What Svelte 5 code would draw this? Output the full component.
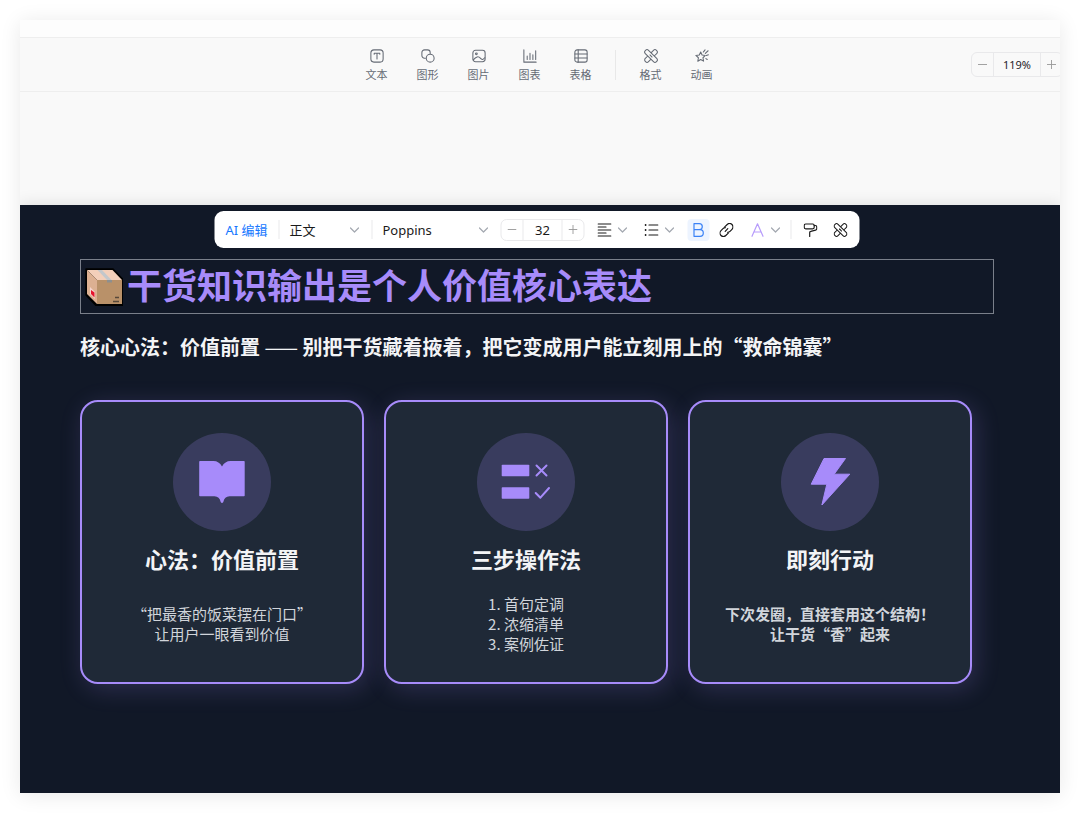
<script lang="ts">
    type Tool = { name: string; icon: string };

    type Card = {
        icon: string;
        title: string;
        lines: string[];
        strong?: boolean;
    };

    const insertTools: Tool[] = [
        { name: "文本", icon: "text" },
        { name: "图形", icon: "shape" },
        { name: "图片", icon: "image" },
        { name: "图表", icon: "chart" },
        { name: "表格", icon: "table" },
    ];

    const styleTools: Tool[] = [
        { name: "格式", icon: "format" },
        { name: "动画", icon: "motion" },
    ];

    const cards: Card[] = [
        { icon: "book", title: "心法：价值前置", lines: ["“把最香的饭菜摆在门口”", "让用户一眼看到价值"] },
        { icon: "steps", title: "三步操作法", lines: ["1. 首句定调", "2. 浓缩清单", "3. 案例佐证"] },
        { icon: "bolt", title: "即刻行动", lines: ["下次发圈，直接套用这个结构！", "让干货“香”起来"], strong: true },
    ];

    let zoom = $state(119);
    let fontSize = $state(32);
    let bold = $state(true);
</script>

{#snippet formatPaths()}
    <rect x="-1" y="5.4" width="18" height="5.2" rx="2.4" transform="rotate(45 8 8)" />
    <g transform="rotate(-45 8 8)">
        <path d="M5 5.4H1.4A2.4 2.4 0 0 0-1 7.800v.4a2.400 2.400 0 0 0 2.400 2.400H5" />
        <path d="M11 5.400h3.600A2.400 2.400 0 0 1 17 7.800v.4a2.400 2.400 0 0 1-2.400 2.400H11" />
    </g>
    <path d="M6.800 6.800l2.400 2.400" />
{/snippet}

{#snippet chevron()}
    <svg class="chevron" viewBox="0 0 10 10" aria-hidden="true"><path d="M1 3l4 4 4-4" /></svg>
{/snippet}

{#snippet toolButton(tool: Tool)}
    <button class="tool">
        <svg class="line-icon" viewBox="0 0 16 16" aria-hidden="true">
            {#if tool.icon === "text"}
                <rect x="1" y="1" width="14" height="14" rx="3.5" />
                <path d="M4.8 6V4.8h6.4V6M8 4.8v6.6" />
            {:else if tool.icon === "shape"}
                <path d="M5 10.5H4a3 3 0 0 1-3-3V4a3 3 0 0 1 3-3h3.5a3 3 0 0 1 3 3v1" />
                <circle cx="10.5" cy="10.5" r="4.5" />
            {:else if tool.icon === "image"}
                <rect x="1" y="1.5" width="14" height="13" rx="3" />
                <circle cx="5" cy="5.5" r="1" />
                <path d="M1.5 12.500c3-4 6-4.500 8-2s3.500 1.500 5-.5" />
            {:else if tool.icon === "chart"}
                <path d="M1 1v14h14M4.8 8v4M8 5v7M11.3 6.5V12M14.5 2v10" />
            {:else if tool.icon === "table"}
                <rect x="1" y="1" width="14" height="14" rx="2.5" />
                <path d="M4.8 1v14M1 5.7h14M1 10.3h14" />
            {:else if tool.icon === "format"}
                {@render formatPaths()}
            {:else}
                <path d="M6.5 3.5l1.600 3.400 3.700.5-2.700 2.600.7 3.900-3.300-1.900L3.200 14l.7-4L1 7.400l3.900-.5z" />
                <path d="M9.5 3.5 11.5 1M11.8 5l3.200-3M13 7.500l2.300-.8M12.500 11l1.500 1" />
            {/if}
        </svg>
        <span>{tool.name}</span>
    </button>
{/snippet}

<main class="window">
    <div class="strip"></div>

    <header class="topbar">
        <nav class="tools">
            {#each insertTools as tool (tool.name)}
                {@render toolButton(tool)}
            {/each}
            <span class="tools-divider"></span>
            {#each styleTools as tool (tool.name)}
                {@render toolButton(tool)}
            {/each}
        </nav>
        <div class="stepper zoom">
            <button aria-label="缩小" onclick={() => (zoom -= 1)}>
                <svg viewBox="0 0 10 10"><path d="M0 5h10" /></svg>
            </button>
            <input aria-label="缩放" value="{zoom}%" readonly />
            <button aria-label="放大" onclick={() => (zoom += 1)}>
                <svg viewBox="0 0 10 10"><path d="M0 5h10M5 0v10" /></svg>
            </button>
        </div>
    </header>

    <div class="canvas">
        <section class="slide">
            <div class="title-box">
                <svg class="package" viewBox="0 0 38 38" aria-hidden="true">
                    <path d="M1 1h27l10 10.5v26H11L1 27z" fill="#000" stroke="#000" stroke-width="1.5" stroke-linejoin="round" />
                    <path d="M2 2h25.5L37 12H12z" fill="#f3cfba" />
                    <path d="M2 2l10 10v24L2 26z" fill="#dcb092" />
                    <path d="M12 12h25v24H12z" fill="#b99169" />
                    <path d="M12.5 2H17l9.5 10H22z" fill="#c3c7cb" />
                    <path d="M22 12h5v2.5h-5z" fill="#8d8f8f" />
                    <path d="M5 19l5 5v7l-5-5z" fill="#f6d5cf" />
                    <path d="M6 22l3.5 2.5v5L6 26z" fill="#e5142d" />
                    <path d="M30 29.5h4M28 33.5h6" stroke="#57483a" stroke-width="1.3" />
                </svg>
                <h1>干货知识输出是个人价值核心表达</h1>

                <div class="floatbar">
                    <button class="ai">AI 编辑</button>
                    <span class="bar"></span>
                    <label class="pick pick-style">
                        <select aria-label="段落样式">
                            <option>正文</option>
                        </select>
                        {@render chevron()}
                    </label>
                    <span class="bar"></span>
                    <label class="pick pick-font">
                        <select aria-label="字体">
                            <option>Poppins</option>
                        </select>
                        {@render chevron()}
                    </label>
                    <div class="stepper size">
                        <button aria-label="减小字号" onclick={() => (fontSize -= 1)}>
                            <svg viewBox="0 0 10 10"><path d="M0 5h10" /></svg>
                        </button>
                        <input aria-label="字号" bind:value={fontSize} />
                        <button aria-label="增大字号" onclick={() => (fontSize += 1)}>
                            <svg viewBox="0 0 10 10"><path d="M0 5h10M5 0v10" /></svg>
                        </button>
                    </div>
                    <button class="menu" aria-label="对齐">
                        <svg class="line-icon" viewBox="0 0 14 14"><path d="M.5 1h13M.5 4h8M.5 7h13M.5 10h8M.5 13h13" /></svg>
                        {@render chevron()}
                    </button>
                    <button class="menu" aria-label="列表">
                        <svg class="line-icon" viewBox="0 0 14 14">
                            <path d="M4.5 2h9M4.5 7h9M4.5 12h9" />
                            <path class="dots" d="M1 2h.01M1 7h.01M1 12h.01" />
                        </svg>
                        {@render chevron()}
                    </button>
                    <button class="bold" class:on={bold} aria-label="加粗" onclick={() => (bold = !bold)}>
                        <svg class="line-icon" viewBox="0 0 14 14">
                            <path d="M2.500.7h5.300a3 3 0 0 1 0 6H2.500zM2.500 6.700h6a3.300 3.300 0 0 1 0 6.600h-6z" />
                        </svg>
                    </button>
                    <button class="icon" aria-label="链接">
                        <svg class="line-icon" viewBox="0 0 14 14">
                            <path d="M5.200 3.900 7.700 1.500a3.300 3.300 0 0 1 4.800 4.800l-2 2a3.300 3.300 0 0 1-2.300 1" />
                            <path d="M8.800 10.100l-2.500 2.400a3.300 3.300 0 0 1-4.800-4.800l2-2a3.300 3.300 0 0 1 2.300-1" />
                            <path d="M5.700 8.300l2.600-2.600" />
                        </svg>
                    </button>
                    <button class="menu color" aria-label="文字颜色">
                        <svg class="line-icon" viewBox="0 0 14 14"><path d="M1.500 13.300 7 .8l5.500 12.500M3.500 9h7" /></svg>
                        {@render chevron()}
                    </button>
                    <span class="bar"></span>
                    <button class="icon first" aria-label="格式刷">
                        <svg class="line-icon" viewBox="0 0 14 14">
                            <rect x=".7" y="1" width="10" height="4.8" rx="1.5" />
                            <path d="M10.700 2.500h1.100a1.500 1.500 0 0 1 1.500 1.500v1.700a1.500 1.500 0 0 1-1.200 1.500L7.300 8.300a1.300 1.300 0 0 0-1.100 1.300v3.900" />
                        </svg>
                    </button>
                    <button class="icon" aria-label="格式">
                        <svg class="line-icon" viewBox="0 0 16 16">{@render formatPaths()}</svg>
                    </button>
                </div>
            </div>

            <p class="subtitle">核心心法：价值前置 <span>——</span> 别把干货藏着掖着，把它变成用户能立刻用上的“救命锦囊”</p>

            <div class="cards">
                {#each cards as card (card.title)}
                    <article class="card">
                        <svg class="badge" viewBox="0 0 98 98" aria-hidden="true">
                            {#if card.icon === "book"}
                                <path d="M27 28h13.500Q46 28 49 33.500Q52 28 57.500 28H71q.7 0 .7.700V62.600q0 .7-.7.700H56.500Q51.500 63.500 50.300 69q-1.300 2.200-2.600 0Q46.500 63.500 41.500 63.300H27q-.8 0-.8-.7V28.700q0-.7.800-.7z" />
                            {:else if card.icon === "steps"}
                                <rect x="24.7" y="31.7" width="27.6" height="11.5" rx=".8" />
                                <rect x="24.7" y="54.3" width="27.6" height="11.5" rx=".8" />
                                <path class="mark" d="M59.5 32.5l10 10M69.5 32.5l-10 10M58.7 60l4.700 4.700L72 55" />
                            {:else}
                                <path class="round" d="M43 25.5h21.500L53.200 41.200h15.600L40.900 72l4.900-20.800H30.200z" />
                            {/if}
                        </svg>
                        <h2>{card.title}</h2>
                        <div class="text" class:strong={card.strong}>
                            {#each card.lines as line}
                                <p>{line}</p>
                            {/each}
                        </div>
                    </article>
                {/each}
            </div>
        </section>
    </div>
</main>

<style>
    :global(body) {
        background: #fff;
    }

    .window {
        margin: 20px 20px 23px;
        background: #f9f9f9;
        box-shadow: 0 2px 20px rgba(0, 0, 0, 0.09);
        font-family: "Noto Sans", "Noto Sans CJK SC", sans-serif;
    }

    h1, h2, p {
        margin: 0;
    }

    button, input, select {
        margin: 0;
        padding: 0;
        border: none;
        background: none;
        color: inherit;
        font: inherit;
    }

    button, select {
        cursor: pointer;
    }

    svg {
        display: block;
        flex: none;
    }

    .line-icon {
        width: 14px;
        height: 14px;
        fill: none;
        stroke: currentColor;
        stroke-width: 1.2;
        stroke-linecap: round;
        stroke-linejoin: round;
    }

    .chevron {
        width: 10px;
        height: 10px;
        fill: none;
        stroke: #a3a8b0;
        stroke-width: 1.2;
        stroke-linecap: round;
        stroke-linejoin: round;
    }

    .strip {
        height: 17px;
        background: #fdfdfd;
        border-bottom: 1px solid #eee;
    }

    .topbar {
        display: grid;
        grid-template-columns: minmax(0, 1fr) auto minmax(0, 1fr);
        align-items: center;
        height: 53px;
        border-bottom: 1px solid #eee;
        overflow: hidden;
    }

    .tools {
        grid-column: 2;
        display: flex;
        align-items: center;
        margin-right: 2px;
    }

    .tool {
        display: flex;
        flex-direction: column;
        align-items: center;
        gap: 4px;
        width: 51px;
        padding-top: 2px;
        color: #656b75;
        font-size: 11px;
        line-height: 16px;
    }

    .tools-divider {
        width: 1px;
        height: 30px;
        margin: 0 9px;
        background: #e8e8e8;
    }

    .stepper {
        display: flex;
        border: 1px solid #e9e9eb;
        border-radius: 6px;
        box-sizing: border-box;
    }

    .stepper button {
        display: flex;
        align-items: center;
        justify-content: center;
        width: 21px;
    }

    .stepper svg {
        width: 9px;
        height: 9px;
        fill: none;
        stroke: #979797;
    }

    .stepper input {
        box-sizing: border-box;
        border: solid #e9e9eb;
        border-width: 0 1px;
        text-align: center;
    }

    .zoom {
        justify-self: end;
        height: 25px;
        margin-right: -3px;
        color: #1f2329;
        font-size: 11px;
    }

    .zoom input {
        width: 48px;
    }

    .canvas {
        padding-top: 113px;
        overflow: hidden;
    }

    .slide {
        padding: 54px 66px 109px 60px;
        background: #111827;
        box-shadow: 0 0 16px rgba(0, 0, 0, 0.12);
    }

    .title-box {
        position: relative;
        display: flex;
        align-items: center;
        gap: 4px;
        height: 53px;
        padding-left: 4px;
        border: 1px solid #7a7f8a;
    }

    .package {
        width: 38px;
        height: 38px;
    }

    h1 {
        padding-bottom: 2px;
        color: #a78bfa;
        font-size: 35px;
        font-weight: 600;
        line-height: 50px;
        white-space: nowrap;
    }

    .floatbar {
        position: absolute;
        bottom: calc(100% + 12px);
        left: 50%;
        transform: translateX(-50%);
        display: flex;
        align-items: center;
        height: 37px;
        border-radius: 9px;
        background: #fff;
        color: #1a1a1a;
        font-size: 13px;
        white-space: nowrap;
    }

    .ai {
        width: 64px;
        color: #1677ff;
    }

    .bar {
        width: 1px;
        height: 19px;
        background: #eaeaec;
    }

    .pick {
        display: grid;
        align-items: center;
    }

    .pick select {
        grid-area: 1 / 1;
        appearance: none;
        width: 100%;
        padding-left: 10px;
        outline: none;
    }

    .pick .chevron {
        grid-area: 1 / 1;
        justify-self: end;
        margin-right: 12px;
        pointer-events: none;
    }

    .pick-style {
        width: 92px;
    }

    .pick-font {
        width: 128px;
    }

    .size {
        height: 22px;
        margin-right: 4px;
    }

    .size input {
        width: 40px;
    }

    .menu {
        display: flex;
        align-items: center;
        justify-content: center;
        gap: 6px;
        width: 47px;
    }

    .dots {
        stroke-width: 2;
    }

    .bold {
        display: flex;
        align-items: center;
        justify-content: center;
        width: 22px;
        height: 22px;
        margin: 0 2px 0 5px;
        border-radius: 4px;
    }

    .bold.on {
        background: #edf4ff;
        color: #3b82f6;
    }

    .icon {
        display: flex;
        justify-content: center;
        width: 30px;
    }

    .icon:last-child {
        margin-right: 4px;
    }

    .icon.first {
        margin-left: 4px;
    }

    .color {
        margin-right: 2px;
    }

    .color .line-icon {
        color: #b79cfb;
    }

    .subtitle {
        margin-top: 18px;
        color: #f3f4f6;
        font-family: "Noto Sans CJK SC", sans-serif;
        font-size: 20px;
        font-weight: 700;
        line-height: 30px;
        white-space: nowrap;
    }

    .subtitle span {
        font-weight: 400;
    }

    .cards {
        display: grid;
        grid-template-columns: repeat(3, 1fr);
        gap: 20px;
        margin: 38px 22px 0 0;
    }

    .card {
        display: flex;
        flex-direction: column;
        align-items: center;
        padding: 31px 20px 28px;
        border: 2px solid #a78bfa;
        border-radius: 18px;
        background: #1f2937;
        box-shadow: 4px 5px 24px rgba(167, 139, 250, 0.2);
        text-align: center;
    }

    .badge {
        width: 98px;
        height: 98px;
        border-radius: 50%;
        background: rgba(167, 139, 250, 0.2);
        fill: #a78bfa;
    }

    .mark {
        fill: none;
        stroke: #a78bfa;
        stroke-width: 2;
        stroke-linecap: round;
        stroke-linejoin: round;
    }

    .round {
        stroke: #a78bfa;
        stroke-linejoin: round;
    }

    h2 {
        margin-top: 12px;
        color: #f3f4f6;
        font-family: "Noto Sans CJK SC", sans-serif;
        font-size: 22px;
        font-weight: 700;
        line-height: 30px;
    }

    .text {
        display: flex;
        flex-direction: column;
        justify-content: center;
        height: 60px;
        margin-top: 21px;
        color: #d1d5db;
        font-family: "Noto Sans CJK SC", sans-serif;
        font-size: 15px;
        line-height: 20px;
        white-space: nowrap;
    }

    .strong {
        font-weight: 700;
    }
</style>
